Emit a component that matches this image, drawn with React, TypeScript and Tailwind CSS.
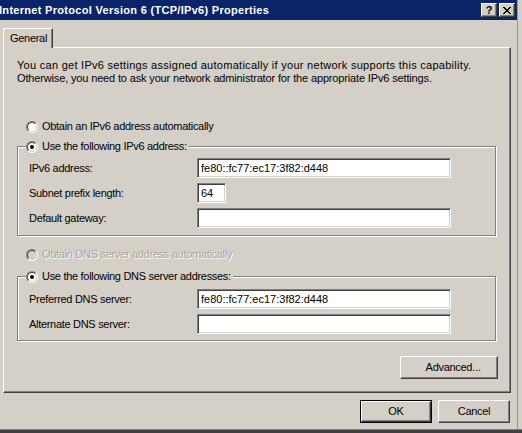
import React from "react";

const Radio = ({ checked, disabled }: { checked?: boolean; disabled?: boolean }) => (
  <div className="w-[12px] h-[12px] shrink-0 rounded-full border border-t-[#808080] border-l-[#808080] border-r-white border-b-white flex">
    <div
      className={`flex-1 rounded-full border border-t-[#404040] border-l-[#404040] border-r-[#d4d0c8] border-b-[#d4d0c8] flex items-center justify-center ${
        disabled ? "bg-[#d4d0c8]" : "bg-white"
      }`}
    >
      {checked && <div className="w-[4px] h-[4px] rounded-full bg-black" />}
    </div>
  </div>
);

const Field = ({ value, w = "w-[254px]" }: { value?: string; w?: string }) => (
  <div
    className={`${w} h-[20px] bg-white border border-t-[#808080] border-l-[#808080] border-r-white border-b-white shadow-[inset_1px_1px_0_#404040,inset_-1px_-1px_0_#d4d0c8] flex items-center px-[3px] text-black tracking-normal`}
  >
    {value}
  </div>
);

const Row = ({ label, value, w }: { label: string; value?: string; w?: string }) => (
  <div className="flex items-center h-[20px]">
    <div className="w-[168px]">{label}</div>
    <Field value={value} w={w} />
  </div>
);

const Btn = ({ children, def, w = "w-[72px]" }: { children: React.ReactNode; def?: boolean; w?: string }) =>
  def ? (
    <div className={`${w} h-[23px] border border-black flex`}>
      <div className="flex-1 border border-t-white border-l-white border-r-[#404040] border-b-[#404040] shadow-[inset_-1px_-1px_0_#808080] flex items-center justify-center">
        {children}
      </div>
    </div>
  ) : (
    <div className={`${w} h-[23px] border border-t-white border-l-white border-r-[#404040] border-b-[#404040] shadow-[inset_-1px_-1px_0_#808080] flex items-center justify-center`}>
      {children}
    </div>
  );

const TitleBtn = ({ children }: { children: React.ReactNode }) => (
  <div className="w-[16px] h-[14px] bg-[#d4d0c8] border border-t-white border-l-white border-r-[#404040] border-b-[#404040] shadow-[inset_-1px_-1px_0_#808080] flex items-center justify-center">
    {children}
  </div>
);

const CloseX = () => (
  <svg width="8" height="7" viewBox="0 0 8 7" shapeRendering="crispEdges">
    <path
      fill="#000"
      d="M0 0h2v1H0zM6 0h2v1H6zM1 1h2v1H1zM5 1h2v1H5zM2 2h4v1H2zM3 3h2v1H3zM2 4h4v1H2zM1 5h2v1H1zM5 5h2v1H5zM0 6h2v1H0zM6 6h2v1H6z"
    />
  </svg>
);

export default function App() {
  return (
    <div className="w-[522px] h-[433px] bg-[#d4d0c8] flex flex-col overflow-hidden font-['Liberation_Sans',Arial,sans-serif] text-[11px] leading-[13px] tracking-[-0.3px] text-black">
      <div className="flex flex-1">
        <div className="w-[517px] flex flex-col">
          {/* Title bar */}
          <div className="h-[20px] bg-[#0a246a] flex items-center justify-between pr-[2px]">
            <div className="ml-[-1px] text-white font-bold tracking-[0.3px]">
              Internet Protocol Version 6 (TCP/IPv6) Properties
            </div>
            <div className="flex gap-[2px]">
              <TitleBtn>
                <span className="font-bold text-[11px] leading-none tracking-normal">?</span>
              </TitleBtn>
              <TitleBtn>
                <CloseX />
              </TitleBtn>
            </div>
          </div>

          {/* Tab */}
          <div className="flex mt-[8px]">
            <div className="relative z-10 ml-[3px] mb-[-1px] w-[50px] h-[20px] bg-[#d4d0c8] border-t border-l border-r border-t-white border-l-white border-r-[#404040] shadow-[inset_-1px_0_0_#808080] flex items-center pl-[6px]">
              General
            </div>
          </div>

          {/* Panel */}
          <div className="ml-[3px] w-[508px] h-[346px] border border-t-white border-l-white border-r-[#404040] border-b-[#404040] shadow-[inset_-1px_-1px_0_#808080] flex flex-col">
            <div className="pt-[11px] pl-[13px]">
              <p className="tracking-[0.28px]">
                You can get IPv6 settings assigned automatically if your network supports this capability.
              </p>
              <p className="tracking-[-0.15px]">
                Otherwise, you need to ask your network administrator for the appropriate IPv6 settings.
              </p>
            </div>

            <div className="mt-[35px] ml-[22px] flex items-center gap-[4px] h-[13px]">
              <Radio />
              <span>Obtain an IPv6 address automatically</span>
            </div>

            <fieldset className="mt-[7px] ml-[13px] mr-[14px] border border-[#808080] shadow-[1px_1px_0_#fff,inset_1px_1px_0_#fff] px-[11px] pb-[7px]">
              <legend className="ml-[-3px] pr-[2px] bg-[#d4d0c8] flex items-center gap-[4px] h-[13px]">
                <Radio checked />
                <span>Use the following IPv6 address:</span>
              </legend>
              <div className="flex flex-col gap-[5px] pt-[5px]">
                <Row label="IPv6 address:" value="fe80::fc77:ec17:3f82:d448" />
                <Row label="Subnet prefix length:" value="64" w="w-[29px]" />
                <Row label="Default gateway:" />
              </div>
            </fieldset>

            <div className="mt-[12px] ml-[22px] flex items-center gap-[4px] h-[13px] text-[#a6a39c] [text-shadow:1px_1px_0_#ffffff]">
              <Radio disabled />
              <span>Obtain DNS server address automatically</span>
            </div>

            <fieldset className="mt-[9px] ml-[13px] mr-[14px] border border-[#808080] shadow-[1px_1px_0_#fff,inset_1px_1px_0_#fff] px-[11px] pb-[6px]">
              <legend className="ml-[-3px] pr-[2px] bg-[#d4d0c8] flex items-center gap-[4px] h-[13px]">
                <Radio checked />
                <span>Use the following DNS server addresses:</span>
              </legend>
              <div className="flex flex-col gap-[5px] pt-[6px]">
                <Row label="Preferred DNS server:" value="fe80::fc77:ec17:3f82:d448" />
                <Row label="Alternate DNS server:" />
              </div>
            </fieldset>

            <div className="flex justify-end mt-[15px] mr-[12px]">
              <Btn w="w-[98px]">
                <span className="pl-[8px]">Advanced...</span>
              </Btn>
            </div>
          </div>

          {/* Dialog buttons */}
          <div className="flex justify-end gap-[6px] mt-[7px] mr-[7px]">
            <Btn def>OK</Btn>
            <Btn>Cancel</Btn>
          </div>
        </div>
        <div className="flex-1 border-l border-l-[#9a9890] bg-[#d4d0c8]" />
      </div>
      <div className="h-[4px] border-t border-t-[#808080] bg-[#404040]" />
    </div>
  );
}
